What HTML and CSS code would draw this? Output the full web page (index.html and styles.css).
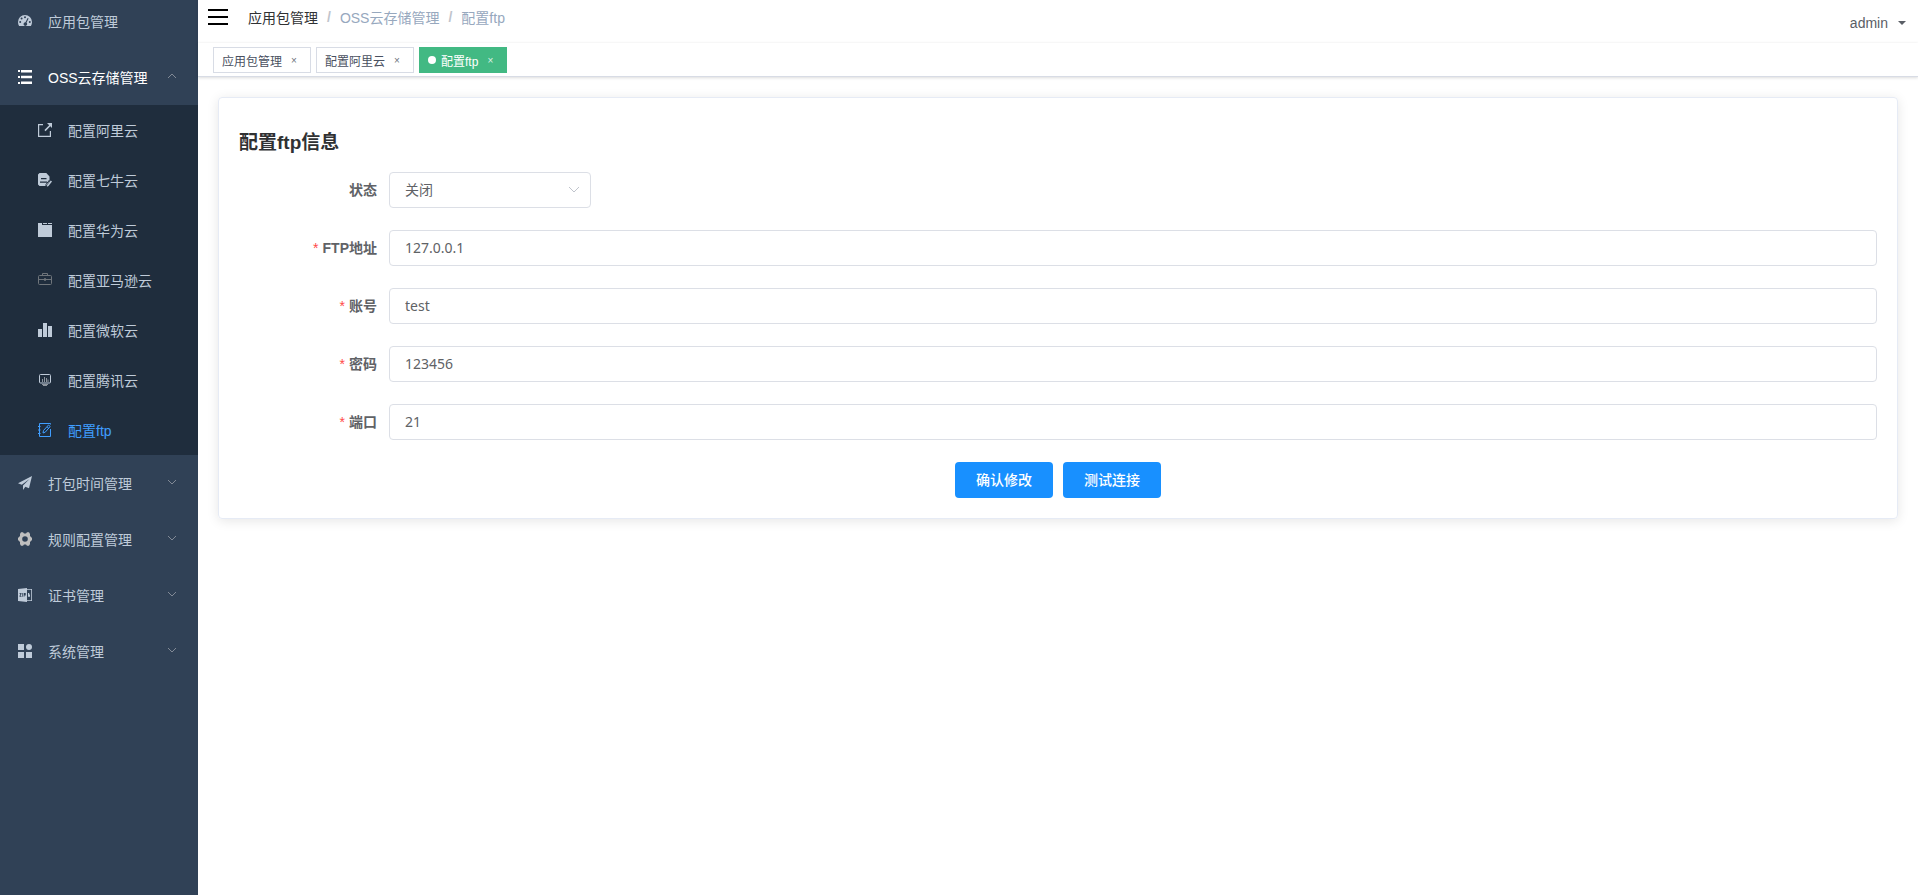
FILE: index.html
```
<!DOCTYPE html>
<html lang="zh-CN">
<head>
  <meta charset="UTF-8">
  <meta name="viewport" content="width=device-width, initial-scale=1.0">
  <title>配置ftp</title>
  <link rel="stylesheet" href="styles.css">
</head>
<body>

<div class="app">
  <aside class="sidebar">
    <nav>
      <ul class="menu">
        <li>
          <a href="#" class="menu-item">
            <svg class="icon" viewBox="0 0 14 14"><path fill-rule="evenodd" d="M7 1a7 7 0 0 0-7 7c0 1.500.4 2.900 1.100 4h11.800A7 7 0 0 0 14 8a7 7 0 0 0-7-7zM7 2.200a1 1 0 1 1 0 2 1 1 0 0 1 0-2zM3.600 3.500a1 1 0 1 1 0 2 1 1 0 0 1 0-2zM2.200 7a1 1 0 1 1 0 2 1 1 0 0 1 0-2zM11.800 7a1 1 0 1 1 0 2 1 1 0 0 1 0-2zM9.600 4l1 .5-2.100 4.200a1.800 1.800 0 1 1-1-.4z"/></svg>
            <span>应用包管理</span>
          </a>
        </li>
        <li>
          <a href="#" class="menu-item opened">
            <svg class="icon" viewBox="0 0 14 14"><path d="M0 0h2v2H0zM3 0h11v2.400H3zM0 6h2v2H0zM3 5.800h11v2.400H3zM0 12h2v2H0zM3 11.600h11V14H3z"/></svg>
            <span>OSS云存储管理</span>
            <svg class="arrow up" viewBox="0 0 12 12"><path d="M2 4l4 4 4-4"/></svg>
          </a>
          <ul class="submenu">
            <li><a href="#" class="menu-item">
              <svg class="icon" viewBox="0 0 14 14"><path d="M0 1h5v1.200H1.200v10.600h10.600V8H13v6H0zM9 0h5v5l-1.700-1.700-4.800 4.900-1.100-1.100 4.800-4.900z"/></svg>
              <span>配置阿里云</span></a></li>
            <li><a href="#" class="menu-item">
              <svg class="icon" viewBox="0 0 14 14"><path fill-rule="evenodd" d="M1.500 0h6.800L11.500 3.500V8L8 13H1.500L0 11.500v-10zM3 5v1.200h5.500V5zM2 8.500v1.200h7V8.500z"/><path d="M12.800 7.500l1.200 1-3.500 4.500-1.700.7.300-1.800z"/><path class="cut" d="M11.500 7L8 11.500V14"/></svg>
              <span>配置七牛云</span></a></li>
            <li><a href="#" class="menu-item">
              <svg class="icon" viewBox="0 0 14 14"><path d="M0 0h4v1.500h1V0h4v1.500h1V0h4v14H0z"/><path class="cut" d="M4 1.500h10"/></svg>
              <span>配置华为云</span></a></li>
            <li><a href="#" class="menu-item">
              <svg class="icon line dim" viewBox="0 0 14 14"><rect x=".5" y="2.500" width="13" height="9" rx="1"/><path d="M4.500 2.500v-2h5v2M.5 6.500H6M8 6.500h5.500M6.500 5.500h1v2h-1z"/></svg>
              <span>配置亚马逊云</span></a></li>
            <li><a href="#" class="menu-item">
              <svg class="icon" viewBox="0 0 14 14"><path d="M0 6h4v8H0zM5 0h4v14H5zM10 3h4v11h-4z"/></svg>
              <span>配置微软云</span></a></li>
            <li><a href="#" class="menu-item">
              <svg class="icon line" viewBox="0 0 14 14"><rect x="1.500" y="1.500" width="11" height="8.500" rx="1"/><path class="faint" d="M4.500 9V6M6.500 9V4M8.500 9V5M10 9V6.500M4 11.500h6M5 12.500h4"/></svg>
              <span>配置腾讯云</span></a></li>
            <li><a href="#" class="menu-item active">
              <svg class="icon line" viewBox="0 0 14 14"><path d="M12.500 6v7.500h-11V.5h11v1M0 3.500h2.500M0 7h2.500M0 10.500h2.500M5 10l.5-2.500 5-5.500 1.700 1.500-5 5.700zM9 3.800l1.700 1.500"/></svg>
              <span>配置ftp</span></a></li>
          </ul>
        </li>
        <li>
          <a href="#" class="menu-item">
            <svg class="icon" viewBox="0 0 14 14"><path d="M14 0L0 7.300l3.800 1.500L11.500 3 5 9.500V14l2.300-3.200 3.700 1.500z"/></svg>
            <span>打包时间管理</span>
            <svg class="arrow" viewBox="0 0 12 12"><path d="M2 4l4 4 4-4"/></svg>
          </a>
        </li>
        <li>
          <a href="#" class="menu-item">
            <svg class="icon gear" viewBox="0 0 14 14"><path fill-rule="evenodd" d="M3 .3h2L6 1.400h2L9 .3h2l1 1.700v2l2 2v2l-2 2v2l-1 1.700H9l-1-1.100H6l-1 1.100H3L2 12v-2L0 8V6l2-2V2zM7 4.200a2.800 2.800 0 1 0 0 5.600 2.800 2.800 0 0 0 0-5.600z"/></svg>
            <span>规则配置管理</span>
            <svg class="arrow" viewBox="0 0 12 12"><path d="M2 4l4 4 4-4"/></svg>
          </a>
        </li>
        <li>
          <a href="#" class="menu-item">
            <svg class="icon" viewBox="0 0 14 14"><path fill-rule="evenodd" d="M0 1l9-1v14l-9-1zM1.500 5v.7h1L1.500 8v.7h2V8h-1l1-2.300V5zM4.300 5v3.700H5V5zM5.700 5v3.700h.7V7.500h1.300V5z"/><path d="M9 1h5v12H9v-.8h4.200V1.800H9zM10 5h1.200v1.500H12v2.200h-2z"/></svg>
            <span>证书管理</span>
            <svg class="arrow" viewBox="0 0 12 12"><path d="M2 4l4 4 4-4"/></svg>
          </a>
        </li>
        <li>
          <a href="#" class="menu-item">
            <svg class="icon" viewBox="0 0 14 14"><path d="M0 0h6v6H0zM0 8h6v6H0zM8 8h6v6H8z"/><circle cx="11" cy="3" r="3"/></svg>
            <span>系统管理</span>
            <svg class="arrow" viewBox="0 0 12 12"><path d="M2 4l4 4 4-4"/></svg>
          </a>
        </li>
      </ul>
    </nav>
  </aside>

  <div class="main">
    <header class="navbar">
      <button class="hamburger" type="button" aria-label="菜单">
        <svg viewBox="0 0 20 16"><path d="M0 1h20M0 8h20M0 15h20"/></svg>
      </button>
      <nav class="breadcrumb">
        <a href="#">应用包管理</a>
        <span class="sep">/</span>
        <span>OSS云存储管理</span>
        <span class="sep">/</span>
        <span>配置ftp</span>
      </nav>
      <button class="user" type="button">admin <span class="caret"></span></button>
    </header>

    <div class="tags">
      <a href="#" class="tag">应用包管理<span class="close">×</span></a>
      <a href="#" class="tag">配置阿里云<span class="close">×</span></a>
      <a href="#" class="tag current">配置ftp<span class="close">×</span></a>
    </div>

    <main class="content">
      <form class="card">
        <h3>配置ftp信息</h3>
        <div class="form-item">
          <label for="status">状态</label>
          <div class="select">
            <select id="status">
              <option>关闭</option>
              <option>开启</option>
            </select>
            <svg viewBox="0 0 12 12"><path d="M1 3l5 5 5-5"/></svg>
          </div>
        </div>
        <div class="form-item required">
          <label for="host">FTP地址</label>
          <input type="text" id="host" value="127.0.0.1">
        </div>
        <div class="form-item required">
          <label for="account">账号</label>
          <input type="text" id="account" value="test">
        </div>
        <div class="form-item required">
          <label for="password">密码</label>
          <input type="text" id="password" value="123456">
        </div>
        <div class="form-item required">
          <label for="port">端口</label>
          <input type="text" id="port" value="21">
        </div>
        <div class="buttons">
          <button type="button">确认修改</button>
          <button type="button">测试连接</button>
        </div>
      </form>
    </main>
  </div>
</div>

</body>
</html>
```
FILE: styles.css
```
* {
  box-sizing: border-box;
}
html, body {
  height: 100%;
}
body {
  margin: 0;
  overflow: hidden;
  font-family: "Liberation Sans", Arial, "Noto Sans CJK SC", sans-serif;
  font-size: 14px;
  color: #606266;
  background: #fff;
}
a {
  color: inherit;
  text-decoration: none;
}
ul {
  list-style: none;
  margin: 0;
  padding: 0;
}
button {
  font-family: inherit;
  cursor: pointer;
}
.app {
  display: flex;
  min-height: calc(100% + 7px);
  margin-top: -7px;
}

/* sidebar */
.sidebar {
  flex: 0 0 198px;
  background: #304156;
  color: #bfcbd9;
}
.menu-item {
  display: flex;
  align-items: center;
  height: 56px;
  padding: 0 20px 0 18px;
}
.menu-item.opened {
  color: #fff;
}
.submenu {
  background: #1f2d3d;
}
.submenu .menu-item {
  height: 50px;
  padding-left: 38px;
}
.menu-item.active {
  color: #409eff;
}
.icon {
  width: 14px;
  height: 14px;
  margin-right: 16px;
  fill: currentColor;
}
.icon.line {
  fill: none;
  stroke: currentColor;
}
.icon.dim {
  color: #6f757b;
}
.icon.gear {
  color: #bfbfbf;
}
.icon .cut {
  fill: none;
  stroke: #1f2d3d;
}
.icon .faint {
  stroke: #8d959e;
}
.arrow {
  width: 12px;
  height: 12px;
  margin: 0 0 2px auto;
  fill: none;
  stroke: #828a96;
}
.arrow.up {
  transform: rotate(180deg);
}

/* top bar */
.main {
  flex: 1;
  min-width: 0;
}
.navbar {
  display: flex;
  align-items: center;
  height: 50px;
  padding: 0 12px 2px 0;
  box-shadow: 0 1px 4px rgba(0, 21, 41, .08);
}
.hamburger {
  padding: 0 10px;
  border: 0;
  background: none;
}
.hamburger svg {
  display: block;
  width: 20px;
  height: 16px;
  stroke: #000;
  stroke-width: 2;
}
.breadcrumb {
  display: flex;
  align-items: center;
  margin-left: 10px;
  color: #97a8be;
}
.breadcrumb a {
  color: #303133;
}
.breadcrumb .sep {
  margin: 0 9px;
  font-weight: bold;
  color: #c0c4cc;
}
.user {
  display: flex;
  align-items: center;
  gap: 10px;
  margin-left: auto;
  padding: 12px 0 0;
  border: 0;
  background: none;
  font-size: 14px;
  color: #5a5e66;
}
.caret {
  border: 4px solid transparent;
  border-top-color: #5a5e66;
  border-bottom: 0;
}

/* opened pages */
.tags {
  display: flex;
  gap: 5px;
  height: 34px;
  padding: 4px 15px;
  background: #fff;
  border-bottom: 1px solid #d8dce5;
  box-shadow: 0 1px 3px rgba(0, 0, 0, .12), 0 0 3px rgba(0, 0, 0, .04);
}
.tag {
  display: flex;
  align-items: center;
  height: 26px;
  padding: 0 8px;
  border: 1px solid #d8dce5;
  font-size: 12px;
  color: #495060;
}
.tag.current {
  background: #42b983;
  border-color: #42b983;
  color: #fff;
}
.tag.current::before {
  content: "";
  width: 8px;
  height: 8px;
  margin-right: 5px;
  border-radius: 50%;
  background: #fff;
}
.close {
  width: 16px;
  margin-left: 4px;
  text-align: center;
  font-size: 10px;
  opacity: .8;
}

/* form */
.content {
  padding: 20px;
}
.card {
  padding: 20px;
  border: 1px solid #e6ebf5;
  border-radius: 4px;
  box-shadow: 0 2px 12px rgba(0, 0, 0, .1);
}
.card h3 {
  margin: 12px 0 16px;
  font-family: "Liberation Sans", "Noto Sans CJK SC", sans-serif;
  font-size: 19px;
  line-height: 26px;
  color: #303133;
}
.form-item {
  display: flex;
  margin-bottom: 22px;
}
.form-item label {
  width: 150px;
  padding-right: 12px;
  line-height: 36px;
  text-align: right;
  font-weight: bold;
}
.form-item.required label::before {
  content: "*";
  margin-right: 4px;
  color: #ff4949;
  font-weight: normal;
}
.form-item input, .form-item select {
  flex: 1;
  width: 100%;
  height: 36px;
  padding: 0 15px 2px;
  border: 1px solid #dcdfe6;
  border-radius: 4px;
  background: #fff;
  font-family: "Noto Sans", "Noto Sans CJK SC", sans-serif;
  font-size: 14px;
  color: #606266;
  appearance: none;
}
.select {
  position: relative;
  width: 202px;
}
.select svg {
  position: absolute;
  top: 12px;
  right: 11px;
  width: 12px;
  height: 12px;
  fill: none;
  stroke: #c0c4cc;
  pointer-events: none;
}
.buttons {
  display: flex;
  justify-content: center;
  gap: 10px;
}
.buttons button {
  height: 36px;
  padding: 0 21px 2px;
  border: 0;
  border-radius: 4px;
  background: #1890ff;
  color: #fff;
  font-size: 14px;
  font-weight: 500;
}
```
